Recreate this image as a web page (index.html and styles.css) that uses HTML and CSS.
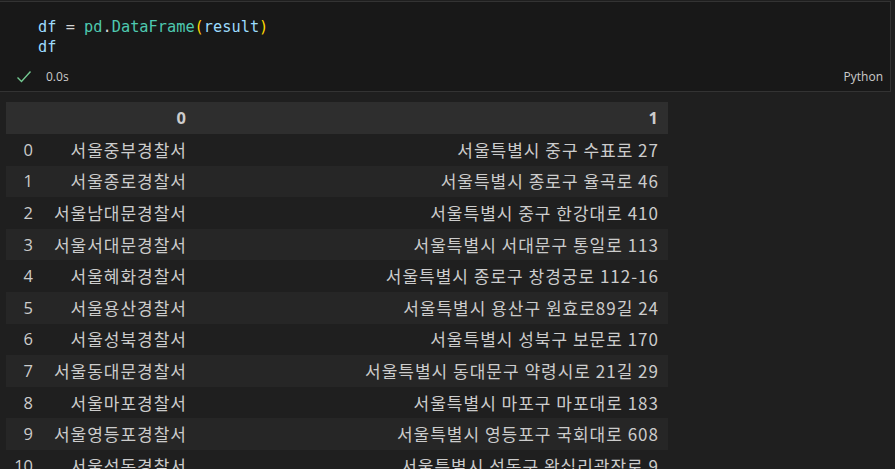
FILE: index.html
```html
<!DOCTYPE html>
<html>
<head>
<meta charset="utf-8">
<link rel="stylesheet" href="styles.css">
</head>
<body>
<div class="cell">
  <div class="code">
    <div class="line"><span class="v">df</span> <span class="o">=</span> <span class="t">pd</span><span class="o">.</span><span class="t">DataFrame</span><span class="p">(</span><span class="v">result</span><span class="p">)</span></div>
    <div class="line"><span class="v">df</span></div>
  </div>
  <div class="status">
    <svg class="check" width="16" height="16" viewBox="0 0 16 16"><path d="M1.5 8.5 L5.5 12.5 L14.5 2.5" fill="none" stroke="#73c991" stroke-width="1.4"/></svg>
    <span class="time">0.0s</span>
    <span class="lang">Python</span>
  </div>
</div>
<table class="df">
  <colgroup><col class="c-idx"><col class="c-0"><col class="c-1"></colgroup>
  <thead><tr><th></th><th>0</th><th>1</th></tr></thead>
  <tbody>
    <tr><td class="idx">0</td><td>서울중부경찰서</td><td>서울특별시 중구 수표로 27</td></tr>
    <tr><td class="idx">1</td><td>서울종로경찰서</td><td>서울특별시 종로구 율곡로 46</td></tr>
    <tr><td class="idx">2</td><td>서울남대문경찰서</td><td>서울특별시 중구 한강대로 410</td></tr>
    <tr><td class="idx">3</td><td>서울서대문경찰서</td><td>서울특별시 서대문구 통일로 113</td></tr>
    <tr><td class="idx">4</td><td>서울혜화경찰서</td><td>서울특별시 종로구 창경궁로 112-16</td></tr>
    <tr><td class="idx">5</td><td>서울용산경찰서</td><td>서울특별시 용산구 원효로89길 24</td></tr>
    <tr><td class="idx">6</td><td>서울성북경찰서</td><td>서울특별시 성북구 보문로 170</td></tr>
    <tr><td class="idx">7</td><td>서울동대문경찰서</td><td>서울특별시 동대문구 약령시로 21길 29</td></tr>
    <tr><td class="idx">8</td><td>서울마포경찰서</td><td>서울특별시 마포구 마포대로 183</td></tr>
    <tr><td class="idx">9</td><td>서울영등포경찰서</td><td>서울특별시 영등포구 국회대로 608</td></tr>
    <tr><td class="idx">10</td><td>서울성동경찰서</td><td>서울특별시 성동구 왕십리광장로 9</td></tr>
  </tbody>
</table>
</body>
</html>
```
FILE: styles.css
```css
html, body {
  margin: 0;
  padding: 0;
  background: #1f1f1f;
  height: 469px;
  overflow: hidden;
}
.cell {
  width: 890px;
  height: 89px;
  margin-top: 1px;
  background: #181818;
  border-top: 1px solid #333333;
  border-right: 1px solid #333333;
  border-bottom: 1px solid #333333;
  display: flex;
  flex-direction: column;
}
.code {
  padding: 15px 0 0 38px;
  font-family: "DejaVu Sans Mono", "Liberation Mono", monospace;
  font-size: 15.3px;
  line-height: 20px;
  color: #d4d4d4;
}
.v { color: #9cdcfe; }
.o { color: #d4d4d4; }
.t { color: #4ec9b0; }
.p { color: #ffd700; }
.status {
  display: flex;
  align-items: center;
  margin-top: 11px;
  padding-left: 16px;
  font-family: "Open Sans", "Liberation Sans", sans-serif;
  font-size: 12px;
  color: #cccccc;
}
.check { margin-right: 14px; }
.lang { margin-left: auto; margin-right: 7px; }
.df {
  margin: 10px 0 0 6px;
  border-collapse: collapse;
  table-layout: fixed;
  width: 662px;
  font-family: "Open Sans", "Noto Sans CJK KR", sans-serif;
  font-size: 16.5px;
  color: #cccccc;
}
.c-idx { width: 38px; }
.c-0 { width: 152px; }
.c-1 { width: 472px; }
.df th, .df td {
  text-align: right;
  padding: 0 10px 0 0;
  white-space: nowrap;
  font-weight: normal;
  line-height: 20px;
}
.df thead tr { height: 32px; background: #2e2e2e; }
.df th { font-weight: bold; }
.df tbody tr { height: 31.6px; }
.df tbody tr:nth-child(even) { background: #262626; }
.df td.idx { text-align: right; padding-right: 11px; }
.df td:not(.idx) {
  font-family: "Noto Sans CJK KR", sans-serif;
  font-size: 17px;
  letter-spacing: 1px;
  padding-right: 9px;
}
```
